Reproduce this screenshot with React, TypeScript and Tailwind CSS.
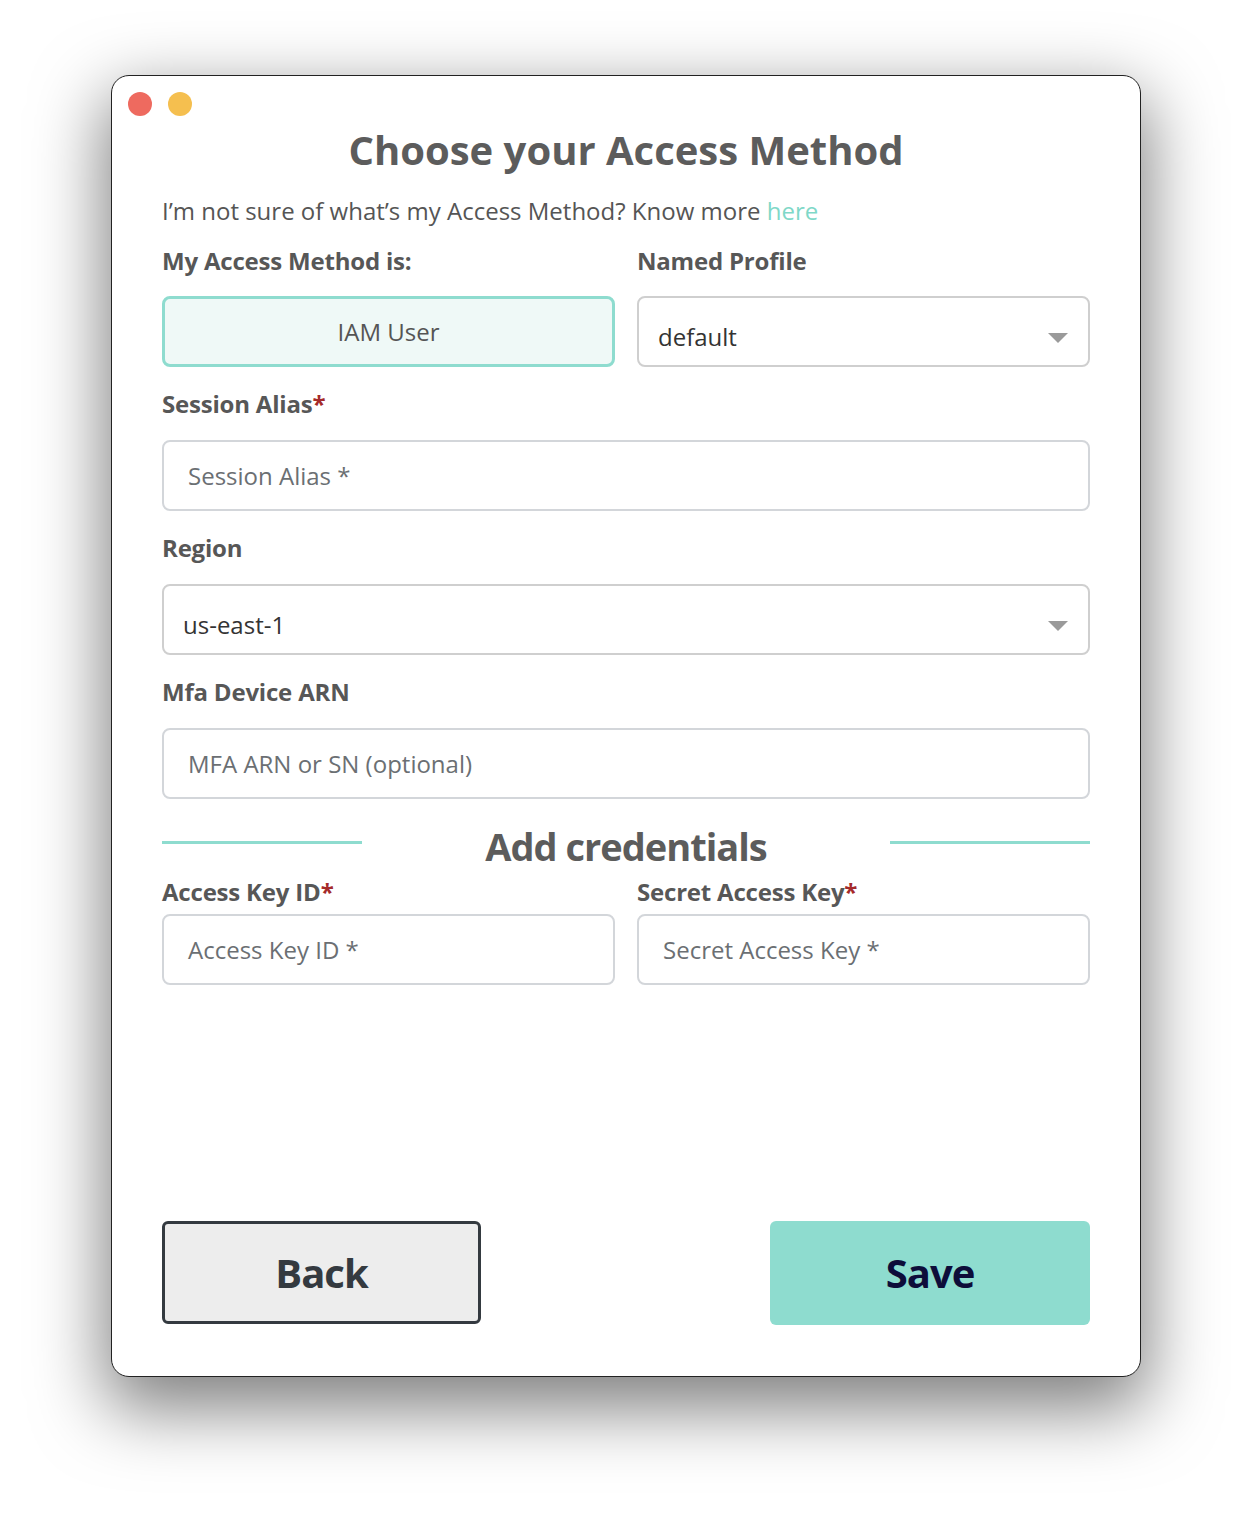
import React from 'react';

const font = { fontFamily: '"Open Sans", "Noto Sans", sans-serif' };

function Label({ text, required }: { text: string; required?: boolean }) {
  return (
    <div className="text-[24px] leading-[32px] font-bold text-[#575757] tracking-[-0.2px]">
      {text}
      {required && <span className="text-[#a52a2a]">*</span>}
    </div>
  );
}

function Caret() {
  return (
    <svg width="20" height="10" viewBox="0 0 20 10" className="shrink-0 mt-[12px]">
      <polygon points="0,0 20,0 10,10" fill="#9a9a9a" />
    </svg>
  );
}

function TextBox({ placeholder }: { placeholder: string }) {
  return (
    <div className="h-[71px] w-full rounded-[8px] border-2 border-[#d3d6da] bg-white flex items-center pl-[24px] text-[24px] text-[#6b6f73]">
      {placeholder}
    </div>
  );
}

function SelectBox({ value }: { value: string }) {
  return (
    <div className="h-[71px] w-full rounded-[8px] border-2 border-[#cfcfcf] bg-white flex items-center justify-between pl-[19px] pr-[20px] text-[24px] text-[#333333]">
      <span className="mt-[10px]">{value}</span>
      <Caret />
    </div>
  );
}

export default function App() {
  return (
    <div className="min-h-screen bg-white pt-[75px]" style={font}>
      <div className="mx-auto w-[1030px] h-[1302px] rounded-[18px] border border-[#222] bg-white shadow-[0_26px_70px_6px_rgba(0,0,0,0.5)] flex flex-col">
        {/* traffic lights */}
        <div className="flex gap-[16px] pl-[16px] pt-[16px]">
          <div className="w-[24px] h-[24px] rounded-full bg-[#ee6a5f]" />
          <div className="w-[24px] h-[24px] rounded-full bg-[#f5bf4f]" />
        </div>

        <div className="px-[50px] flex flex-col flex-1">
          <h1 className="mt-[6px] text-center text-[40px] leading-[56px] font-bold text-[#5c5c5c]">
            Choose your Access Method
          </h1>

          <p className="mt-[17px] text-[24px] leading-[32px] text-[#555555]">
            I’m not sure of what’s my Access Method? Know more <span className="text-[#7fd8c8]">here</span>
          </p>

          <div className="mt-[18px] grid grid-cols-2 gap-x-[22px]">
            <div>
              <Label text="My Access Method is:" />
              <div className="mt-[19px] h-[71px] rounded-[8px] border-[3px] border-[#8edccf] bg-[#eff9f7] flex items-center justify-center text-[24px] text-[#555555]">
                IAM User
              </div>
            </div>
            <div>
              <Label text="Named Profile" />
              <div className="mt-[19px]">
                <SelectBox value="default" />
              </div>
            </div>
          </div>

          <div className="mt-[21px]">
            <Label text="Session Alias" required />
            <div className="mt-[20px]">
              <TextBox placeholder="Session Alias *" />
            </div>
          </div>

          <div className="mt-[21px]">
            <Label text="Region" />
            <div className="mt-[20px]">
              <SelectBox value="us-east-1" />
            </div>
          </div>

          <div className="mt-[21px]">
            <Label text="Mfa Device ARN" />
            <div className="mt-[20px]">
              <TextBox placeholder="MFA ARN or SN (optional)" />
            </div>
          </div>

          {/* section divider */}
          <div className="mt-[23px] flex items-center justify-between">
            <div className="w-[200px] h-[3px] bg-[#8edccf] -mt-[8px]" />
            <h2 className="text-[38px] leading-[48px] font-bold text-[#5c5c5c] tracking-[-1px]">Add credentials</h2>
            <div className="w-[200px] h-[3px] bg-[#8edccf] -mt-[8px]" />
          </div>

          <div className="mt-[6px] grid grid-cols-2 gap-x-[22px]">
            <div>
              <Label text="Access Key ID" required />
              <div className="mt-[6px]">
                <TextBox placeholder="Access Key ID *" />
              </div>
            </div>
            <div>
              <Label text="Secret Access Key" required />
              <div className="mt-[6px]">
                <TextBox placeholder="Secret Access Key *" />
              </div>
            </div>
          </div>

          <div className="mt-auto mb-[51px] flex justify-between">
            <button className="w-[319px] h-[103px] rounded-[6px] border-[3px] border-[#343a40] bg-[#ededed] text-[40px] font-bold text-[#343a40] tracking-[-1px]">
              Back
            </button>
            <button className="w-[320px] h-[104px] rounded-[6px] bg-[#8edccf] text-[40px] font-bold text-[#0d0d3a] tracking-[-1px]">
              Save
            </button>
          </div>
        </div>
      </div>
    </div>
  );
}
